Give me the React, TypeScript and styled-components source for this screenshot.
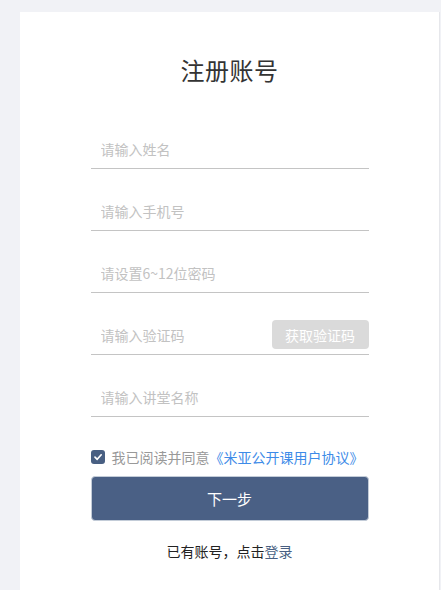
import React from "react";
import styled, { createGlobalStyle } from "styled-components";

const Global = createGlobalStyle`
  html, body { margin: 0; padding: 0; }
  body {
    background: #f1f2f6;
    font-family: "Noto Sans CJK SC", "Noto Sans", "Liberation Sans", sans-serif;
    overflow: hidden;
  }
  input::placeholder { color: #c2c2c2; }
`;

const Page = styled.div`
  display: flex;
  padding: 12px 0 0 20px;
  height: 590px;
  box-sizing: border-box;
`;

const Card = styled.div`
  width: 420px;
  background: #fff;
  border-right: 1px solid #e6e7eb;
  padding-top: 43px;
  box-sizing: border-box;
  display: flex;
  flex-direction: column;
  align-items: center;
`;

const Title = styled.h1`
  margin: 0 0 23px;
  font-size: 24px;
  line-height: 29px;
  font-weight: 400;
  color: #333;
  letter-spacing: 0.5px;
`;

const Form = styled.div`
  width: 278px;
  display: flex;
  flex-direction: column;
`;

const Row = styled.div`
  height: 62px;
  box-sizing: border-box;
  border-bottom: 1px solid #c4c4c4;
  display: flex;
  align-items: flex-end;
  padding-bottom: 5px;
`;

const Input = styled.input`
  flex: 1;
  min-width: 0;
  height: 28px;
  border: none;
  outline: none;
  padding: 0 10px;
  font-family: inherit;
  font-size: 14px;
  color: #333;
  background: transparent;
`;

const CodeButton = styled.button`
  width: 97px;
  height: 29px;
  border: none;
  border-radius: 4px;
  background: #dadada;
  color: #fff;
  font-family: inherit;
  font-size: 14px;
  padding: 0;
`;

const Agree = styled.label`
  margin-top: 30px;
  display: flex;
  align-items: center;
  gap: 7px;
  height: 20px;
  font-size: 14px;
  color: #999;
`;

const Box = styled.span`
  width: 14px;
  height: 14px;
  border-radius: 3px;
  background: #485f82;
  display: flex;
  align-items: center;
  justify-content: center;
`;

const Link = styled.span<{ $tone: string }>`
  color: ${(p) => p.$tone};
  cursor: pointer;
`;

const Submit = styled.button`
  margin-top: 9px;
  height: 45px;
  border: 1px solid #c3ccd8;
  border-radius: 4px;
  background: #4a6085;
  color: #fff;
  font-family: inherit;
  font-size: 15px;
`;

const Footer = styled.div`
  margin-top: 20px;
  text-align: center;
  font-size: 14px;
  line-height: 20px;
  color: #222;
`;

export default function App() {
  return (
    <>
      <Global />
      <Page>
        <Card>
          <Title>注册账号</Title>
          <Form>
            <Row>
              <Input placeholder="请输入姓名" />
            </Row>
            <Row>
              <Input placeholder="请输入手机号" />
            </Row>
            <Row>
              <Input placeholder="请设置6~12位密码" type="password" />
            </Row>
            <Row>
              <Input placeholder="请输入验证码" />
              <CodeButton>获取验证码</CodeButton>
            </Row>
            <Row>
              <Input placeholder="请输入讲堂名称" />
            </Row>
            <Agree>
              <Box>
                <svg width="10" height="10" viewBox="0 0 10 10">
                  <path d="M2 5.2 L4.2 7.3 L8.2 2.8" fill="none" stroke="#fff" strokeWidth="1.7" strokeLinecap="round" strokeLinejoin="round" />
                </svg>
              </Box>
              <span>
                我已阅读并同意<Link $tone="#3d8be8">《米亚公开课用户协议》</Link>
              </span>
            </Agree>
            <Submit>下一步</Submit>
            <Footer>
              已有账号，点击<Link $tone="#485f82">登录</Link>
            </Footer>
          </Form>
        </Card>
      </Page>
    </>
  );
}
